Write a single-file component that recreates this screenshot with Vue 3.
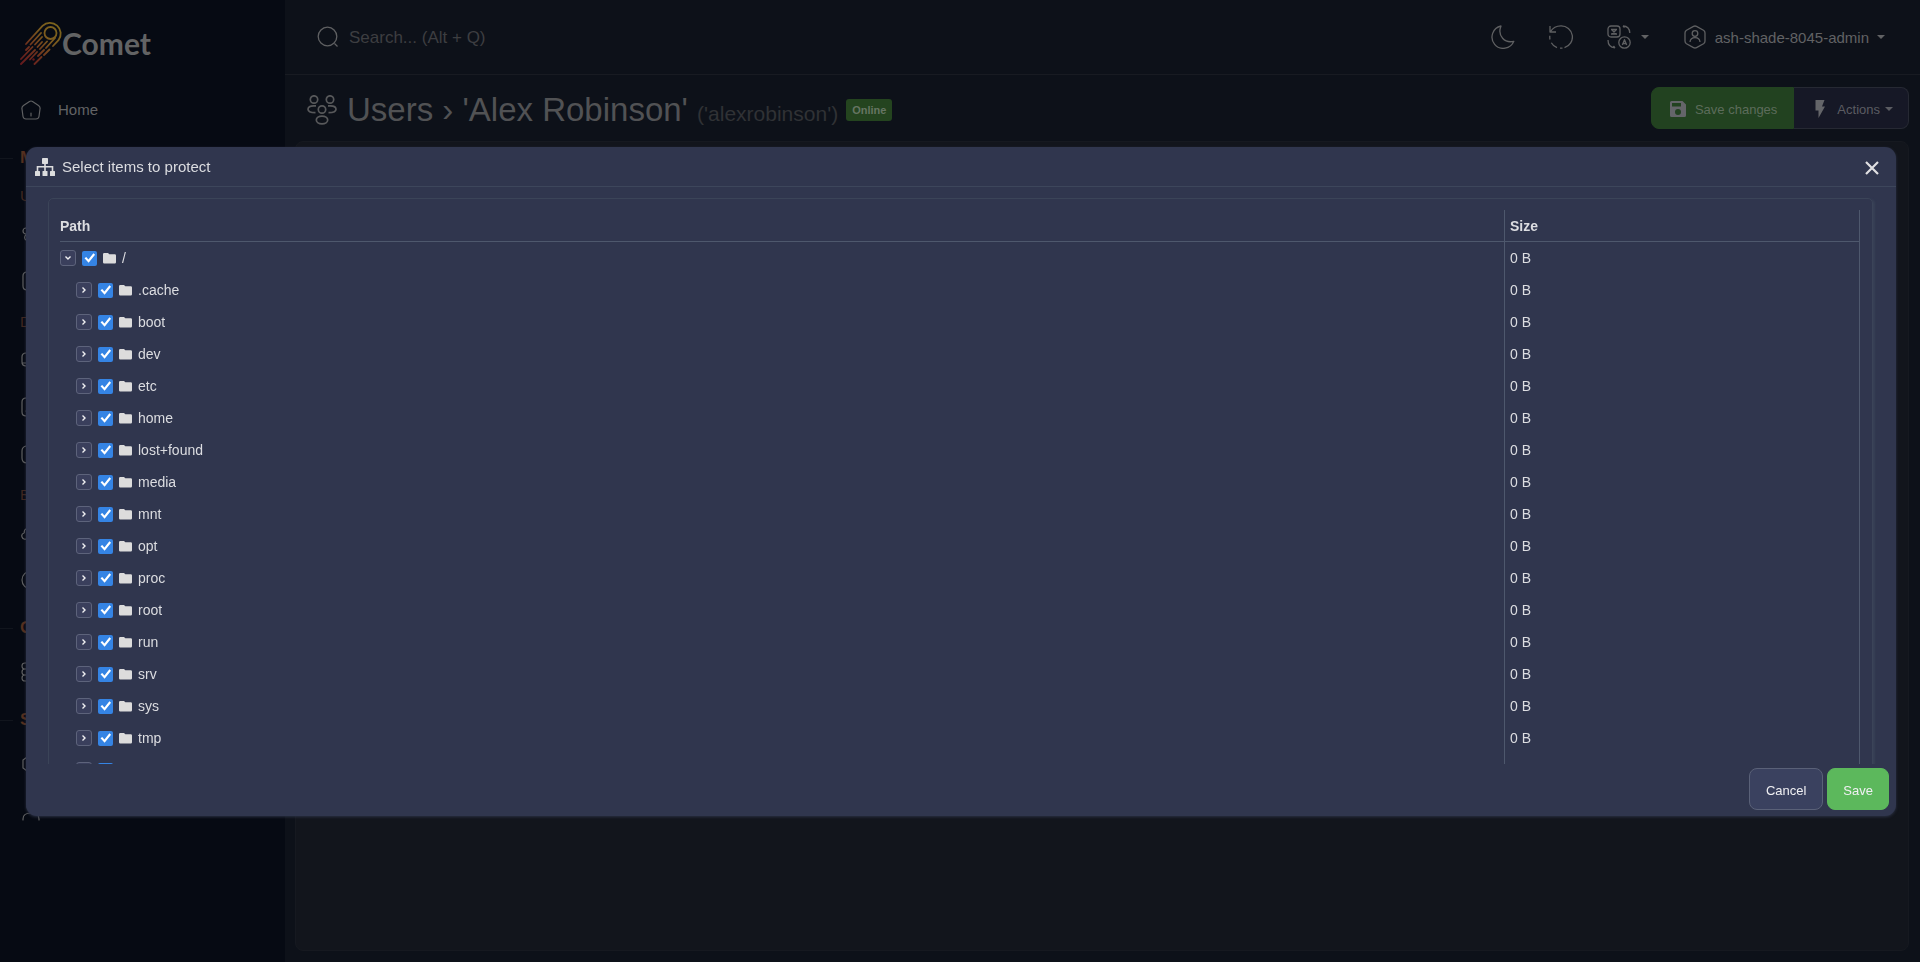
<template>
  <div class="layout">
    <aside class="sidebar">
      <a href="#" class="logo">
        <svg class="logo__mark" viewBox="0 0 42 44" fill="none">
          <defs>
            <linearGradient id="comet" x1="40" y1="3" x2="2" y2="43" gradientUnits="userSpaceOnUse">
              <stop offset="0" stop-color="#7b661c" />
              <stop offset="0.35" stop-color="#7b591e" />
              <stop offset="0.7" stop-color="#6e2f1d" />
              <stop offset="1" stop-color="#651a1d" />
            </linearGradient>
          </defs>
          <g stroke="url(#comet)" stroke-width="1.8" stroke-linecap="round">
            <circle cx="30.5" cy="12" r="6" />
            <path d="M6 23L22.500 4.800A10.800 10.800 0 0 1 38.500 19.200L33 25" />
            <path d="M10.500 23.500L21 12M9 26L6 29M22 16L15 23.500M12.500 26L1 38" />
            <path d="M22 21L17.500 26M15 29L1 43M27 20.500L20 28M17 31L10 38.500" />
            <path d="M35 17L26 27M24 29L18 35M29.500 28.500L24 34M21.500 36L14.500 43" />
          </g>
          <circle cx="13.5" cy="38.5" r="1.2" fill="#651a1d" />
        </svg>
        <span class="logo__text">Comet</span>
      </a>

      <nav class="menu">
        <template v-for="entry in menu" :key="entry.label">
          <h3 v-if="entry.type === 'section'" class="menu__section">{{ entry.label }}</h3>
          <h4 v-else-if="entry.type === 'group'" class="menu__group">{{ entry.label }}</h4>
          <a v-else href="#" class="menu__item">
            <svg class="menu__icon" viewBox="0 0 20 20">
              <path :d="entry.icon" />
            </svg>
            <span>{{ entry.label }}</span>
          </a>
        </template>
      </nav>
    </aside>

    <div class="main">
      <header class="topbar">
        <label class="search">
          <svg class="search__icon" viewBox="0 0 22 22">
            <circle cx="10.5" cy="10.5" r="9.3" />
            <path d="M17.500 17.500L20.500 20.500" />
          </svg>
          <input type="text" placeholder="Search... (Alt + Q)" aria-label="Search" />
        </label>

        <div class="topbar__tools">
          <button type="button" class="tool" aria-label="Toggle theme">
            <svg viewBox="0 0 24 24">
              <path d="M10 1A11.300 11.300 0 1 0 22.800 16.300C14 18.500 6 11 10 1Z" />
            </svg>
          </button>
          <button type="button" class="tool" aria-label="Refresh">
            <svg viewBox="0 0 24 24">
              <path d="M1 1V7H7M1.500 6.500C4 2.500 8 .800 12 .800A11.200 11.200 0 0 1 15.500 22.700" />
              <path d="M11 23.200H13.500M8 22.600C5.500 21.700 3.500 20 2.300 17.800M1 14.500C.700 13 .700 12 .800 10.700" />
            </svg>
          </button>
          <button type="button" class="tool tool--lang" aria-label="Language">
            <svg viewBox="0 0 24 24">
              <rect x="1" y="1" width="12" height="11" rx="3" />
              <path d="M4 4.500H10M5 5L9 9M9 5L5 9M4 9H10" />
              <circle cx="17.5" cy="17.5" r="5.7" />
              <path d="M15.300 20L17.500 14.700L19.700 20M16 18.500H19" />
              <path d="M16 1C20 1 22.500 3.500 22.800 8M16 1L17.500 2.500M1 15C1 19 3 22.500 8 22.800M8 22.800L6.500 21" />
            </svg>
            <span class="caret"></span>
          </button>
          <button type="button" class="tool tool--user">
            <svg viewBox="0 0 24 24">
              <path d="M10.500 1.400Q12 .600 13.500 1.400L20.500 5.300Q22 6.200 22 8V16Q22 17.800 20.500 18.700L13.500 22.600Q12 23.400 10.500 22.600L3.500 18.700Q2 17.800 2 16V8Q2 6.200 3.500 5.300Z" />
              <circle cx="12" cy="8.5" r="2.8" />
              <path d="M7 17C7.300 14 9.300 12.700 12 12.700S16.700 14 17 17" />
            </svg>
            <span>ash-shade-8045-admin</span>
            <span class="caret"></span>
          </button>
        </div>
      </header>

      <div class="heading">
        <div class="heading__text">
          <svg class="heading__icon" viewBox="0 0 30 30">
            <circle cx="7" cy="4.5" r="3.7" />
            <circle cx="23" cy="4.5" r="3.7" />
            <circle cx="15" cy="14.5" r="3.7" />
            <ellipse cx="15" cy="25" rx="5.7" ry="3.8" />
            <path d="M9 10.800H6.500C3 10.800 1 12.300 1 14.300S3 17.700 8.500 17.700" />
            <path d="M21 10.800H23.500C27 10.800 29 12.300 29 14.300S27 17.700 21.500 17.700" />
          </svg>
          <h1 class="heading__title">Users › 'Alex Robinson' <small>('alexrobinson')</small></h1>
          <span class="badge">Online</span>
        </div>
        <div class="heading__actions">
          <button type="button" class="page-btn page-btn--save">
            <svg viewBox="0 0 18 18">
              <path fill-rule="evenodd" d="M2.500 1H13.500L17 4.500V15.500Q17 17 15.500 17H2.500Q1 17 1 15.500V2.500Q1 1 2.500 1ZM3 3V6.500H12V3ZM9 9A3 3 0 1 0 9 15A3 3 0 1 0 9 9Z" />
            </svg>
            Save changes
          </button>
          <button type="button" class="page-btn page-btn--actions">
            <svg viewBox="0 0 18 18">
              <path d="M4.500 0H13.500L11 6.500H14L7.500 18V10.500H4.500Z" />
            </svg>
            Actions
            <span class="caret"></span>
          </button>
        </div>
      </div>

      <section class="card"></section>
    </div>

    <div v-if="open" class="overlay">
      <div class="modal" role="dialog" aria-labelledby="modal-title">
        <div class="modal__header">
          <svg class="modal__icon" viewBox="0 0 20 18">
            <rect x="7" y="0" width="6" height="6" rx="0.7" />
            <rect x="0" y="13" width="5" height="5" rx="0.5" />
            <rect x="7.5" y="13" width="5" height="5" rx="0.5" />
            <rect x="15" y="13" width="5" height="5" rx="0.5" />
            <path d="M9.200 5H10.800V8H18.300V13H16.700V9.600H10.800V13H9.200V9.600H3.300V13H1.700V8H9.200Z" />
          </svg>
          <h2 id="modal-title" class="modal__title">Select items to protect</h2>
          <button type="button" class="modal__close" aria-label="Close" @click="open = false">
            <svg viewBox="0 0 14 14">
              <path d="M1 1L13 13M13 1L1 13" />
            </svg>
          </button>
        </div>

        <div class="modal__body">
          <div class="panel">
            <table class="tree">
              <colgroup>
                <col />
                <col class="tree__size" />
              </colgroup>
              <thead>
                <tr>
                  <th>Path</th>
                  <th>Size</th>
                </tr>
              </thead>
              <tbody>
                <tr v-for="row in visibleRows" :key="row.name">
                  <td>
                    <div class="node" :class="{ 'node--child': row.depth > 0 }">
                      <button
                        type="button"
                        class="node__toggle"
                        :class="{ 'is-open': row.depth === 0 && expanded }"
                        :aria-label="'Expand ' + row.name"
                        @click="toggle(row)"
                      >
                        <svg viewBox="0 0 8 8"><path d="M2.500 1.500L5 4L2.500 6.500" /></svg>
                      </button>
                      <input :id="'node-' + row.name" v-model="row.checked" type="checkbox" />
                      <label :for="'node-' + row.name">
                        <svg viewBox="0 0 13 11">
                          <path d="M1.200 0H5L6.300 1.300H11.800Q13 1.300 13 2.500V9.300Q13 10.500 11.800 10.500H1.200Q0 10.500 0 9.300V1.200Q0 0 1.200 0Z" />
                        </svg>
                        {{ row.name }}
                      </label>
                    </div>
                  </td>
                  <td>0 B</td>
                </tr>
              </tbody>
            </table>
          </div>
        </div>

        <div class="modal__footer">
          <button type="button" class="btn" @click="open = false">Cancel</button>
          <button type="button" class="btn btn--primary" @click="open = false">Save</button>
        </div>
      </div>
    </div>
  </div>
</template>

<script setup>
import { computed, reactive, ref } from "vue";

const open = ref(true);
const expanded = ref(true);

const person =
  "M10 1A4 4 0 1 1 10 9A4 4 0 1 1 10 1ZM2 19V18C2 14 5 12 10 12S18 14 18 18V19";
const box =
  "M5 1H15Q19 1 19 5V15Q19 19 15 19H5Q1 19 1 15V5Q1 1 5 1ZM5 14H15";
const cloud =
  "M5 16H15A4 4 0 0 0 16 8A6 6 0 0 0 5 6C2 7 4 10 3 10A3 3 0 0 0 5 16Z";

const menu = [
  {
    label: "Home",
    icon: "M8.500 1.500Q10 .500 11.500 1.500L17.500 5.500Q19.500 7 19 9L18 16.500Q17.500 19 15 19H5Q2.500 19 2 16.500L1 9Q.500 7 2.500 5.500ZM10 13V16",
  },
  { type: "section", label: "Manage" },
  { type: "group", label: "Users" },
  {
    label: "Accounts",
    icon: "M5 4A3 3 0 1 1 5 10A3 3 0 1 1 5 4ZM14 4A3 3 0 1 1 14 10A3 3 0 1 1 14 4ZM5 11A3 3 0 0 0 5 16H14",
  },
  { label: "Groups", icon: "M6 1H15Q19 1 19 5V15Q19 19 15 19H6Q2 19 2 15V5Q2 1 6 1Z" },
  { type: "group", label: "Devices" },
  {
    label: "Computers",
    icon: "M5 3H15Q19 3 19 7V16H5Q1 16 1 12V7Q1 3 5 3ZM1 13H19",
  },
  { label: "Policies", icon: box },
  {
    label: "Software",
    icon: "M7 2H14Q19 2 19 7V14Q19 19 14 19H6Q1 19 1 14V7Q1 3 5 2M9 7A3 3 0 1 0 9 13",
  },
  { type: "group", label: "Backup" },
  { label: "Storage", icon: cloud },
  { label: "Jobs", icon: "M10 1A9 9 0 1 1 10 19A9 9 0 1 1 10 1ZM10 5V10L13 12" },
  { type: "section", label: "Overview" },
  {
    label: "Server",
    icon: "M4 1H16Q19 1 19 4T16 7H4Q1 7 1 4T4 1ZM4 7H16Q19 7 19 10T16 13H4Q1 13 1 10T4 7ZM4 13H16Q19 13 19 16T16 19H4Q1 19 1 16T4 13Z",
  },
  { type: "section", label: "Support" },
  { label: "Help", icon: "M6 3H14L19 7V13L14 17H6L2 14V6Z" },
  { label: "Comet Account Portal", icon: person },
];

const rows = reactive(
  [
    "/",
    ".cache",
    "boot",
    "dev",
    "etc",
    "home",
    "lost+found",
    "media",
    "mnt",
    "opt",
    "proc",
    "root",
    "run",
    "srv",
    "sys",
    "tmp",
    "usr",
    "var",
  ].map((name, i) => ({ name, depth: i === 0 ? 0 : 1, checked: true })),
);

const visibleRows = computed(() =>
  expanded.value ? rows : rows.filter((r) => r.depth === 0),
);

function toggle(row) {
  if (row.depth === 0) expanded.value = !expanded.value;
}
</script>

<style>
body {
  margin: 0;
  background: #0d1119;
}
</style>

<style scoped>
.layout {
  display: flex;
  height: 100vh;
  overflow: hidden;
  background: #0d1119;
  color: #616264;
  font-family: "Liberation Sans", Arial, sans-serif;
  font-size: 15px;
}

.layout *,
.layout *::before {
  box-sizing: border-box;
}

button {
  font-family: inherit;
  cursor: pointer;
}

svg {
  flex-shrink: 0;
}

.sidebar {
  width: 285px;
  flex-shrink: 0;
  background: #060a13;
}

.logo {
  display: flex;
  align-items: center;
  height: 86px;
  padding-left: 20px;
  text-decoration: none;
  color: #626364;
}

.logo__mark {
  width: 42px;
  height: 44px;
}

.logo__text {
  font-family: Lato, sans-serif;
  font-weight: 700;
  font-size: 30px;
}

.menu__item {
  display: flex;
  align-items: center;
  gap: 17px;
  height: 47px;
  padding-left: 21px;
  color: #626365;
  text-decoration: none;
}

.menu__icon {
  width: 20px;
  height: 20px;
  fill: none;
  stroke: #5f6062;
  stroke-width: 1.2;
  stroke-linecap: round;
}

.menu__section,
.menu__group {
  display: flex;
  align-items: center;
  margin: 0;
  color: #54301f;
}

.menu__section {
  height: 45px;
  padding-top: 5px;
  gap: 7px;
  font-size: 17px;
}

.menu__section::before {
  content: "";
  width: 13px;
  height: 1px;
  background: #11151d;
}

.menu__group {
  height: 32px;
  padding: 2px 0 0 20px;
  font-size: 15px;
  font-weight: 400;
  color: #402821;
}

.main {
  flex: 1;
  min-width: 0;
  display: flex;
  flex-direction: column;
}

.topbar {
  display: flex;
  align-items: center;
  justify-content: space-between;
  height: 75px;
  padding: 0 32px;
  border-bottom: 1px solid #181b22;
}

.search {
  display: flex;
  align-items: center;
  gap: 10px;
}

.search__icon {
  width: 22px;
  height: 22px;
  fill: none;
  stroke: #5f6062;
  stroke-width: 1.3;
}

.search input {
  width: 300px;
  padding: 2px 0 0;
  border: none;
  outline: none;
  background: transparent;
  font-family: inherit;
  font-size: 17px;
}

.search input::placeholder {
  color: #3d3e41;
}

.topbar__tools {
  display: flex;
  align-items: center;
  gap: 34px;
}

.tool {
  display: flex;
  align-items: center;
  gap: 10px;
  padding: 0;
  border: none;
  background: transparent;
  color: #616264;
  font-size: 15px;
}

.tool svg {
  width: 24px;
  height: 24px;
  fill: none;
  stroke: #5f6062;
  stroke-width: 1.3;
  stroke-linejoin: round;
}

.tool--user {
  padding-right: 3px;
  gap: 8px;
}

.caret {
  border: 4px solid transparent;
  border-top-color: currentColor;
  border-bottom: none;
}

.heading {
  display: flex;
  align-items: center;
  justify-content: space-between;
  height: 66px;
  padding: 0 11px 0 22px;
}

.heading__text {
  display: flex;
  align-items: center;
  padding-top: 4px;
}

.heading__icon {
  width: 30px;
  height: 30px;
  fill: none;
  stroke: #58595b;
  stroke-width: 1.7;
}

.heading__title {
  margin: 0 0 0 10px;
  padding-top: 3px;
  font-size: 33px;
  line-height: 40px;
  font-weight: 400;
  color: #515254;
}

.heading__title small {
  font-size: 21px;
  color: #303235;
}

.badge {
  margin-left: 8px;
  padding: 0 6px;
  border-radius: 3px;
  background: #24441f;
  color: #667563;
  font-size: 11px;
  line-height: 22px;
  font-weight: 700;
}

.heading__actions {
  display: flex;
}

.page-btn {
  display: flex;
  align-items: center;
  gap: 8px;
  height: 42px;
  border: 1px solid #262933;
  background: #161826;
  color: #5b5c62;
  font-size: 13px;
}

.page-btn svg {
  width: 18px;
  height: 18px;
  fill: #646569;
}

.page-btn--save {
  padding: 2px 16px 0 17px;
  border-color: #224220;
  border-radius: 8px 0 0 8px;
  background: #224220;
  color: #5d6c5b;
}

.page-btn--actions {
  padding: 2px 15px 0 17px;
  border-left: none;
  border-radius: 0 8px 8px 0;
}

.page-btn .caret {
  margin-left: -3px;
}

.card {
  flex: 1;
  margin: 0 11px 11px 10px;
  border: 1px solid #161920;
  border-radius: 8px;
  background: #12151c;
}

.overlay {
  position: fixed;
  inset: 0;
  display: flex;
  padding: 147px 24px 146px 26px;
}

.modal {
  flex: 1;
  min-width: 0;
  display: flex;
  flex-direction: column;
  border-radius: 11px;
  background: #30364e;
  color: #dcdde1;
  box-shadow: 0 1px 3px #2b3144;
}

.modal__header {
  display: flex;
  align-items: center;
  height: 40px;
  padding: 0 17px 0 9px;
  border-bottom: 1px solid #3d465b;
}

.modal__icon {
  width: 20px;
  height: 18px;
  fill: #dcddde;
}

.modal__title {
  margin: 0 0 0 7px;
  font-size: 15px;
  font-weight: 400;
}

.modal__close {
  display: flex;
  margin-left: auto;
  padding: 2px 0 0;
  border: none;
  background: transparent;
}

.modal__close svg {
  width: 14px;
  height: 14px;
  stroke: #e0e0e2;
  stroke-width: 2.2;
}

.modal__body {
  flex: 1;
  min-height: 0;
  padding: 11px 23px 0 22px;
  overflow-y: auto;
  scrollbar-width: none;
}

.panel {
  padding: 11px 12px 11px 11px;
  border: 1px solid #3b4458;
  border-radius: 5px;
  box-shadow: 2px 1px 2px #384156;
}

.tree {
  width: 100%;
  table-layout: fixed;
  border-spacing: 0;
  font-size: 14px;
  line-height: 16px;
}

.tree__size {
  width: 356px;
}

.tree th {
  height: 32px;
  padding: 0;
  border-bottom: 1px solid #4e586d;
  text-align: left;
}

.tree td {
  height: 32px;
  padding: 0;
}

.tree th:last-child,
.tree td:last-child {
  padding-left: 5px;
  border-left: 1px solid #4e586d;
  border-right: 1px solid #4e586d;
}

.node {
  display: flex;
  align-items: center;
  gap: 6px;
}

.node--child {
  padding-left: 16px;
}

.node__toggle {
  display: flex;
  align-items: center;
  justify-content: center;
  width: 16px;
  height: 16px;
  padding: 0;
  border: 1px solid #5d637b;
  border-radius: 3px;
  background: #3a3f5c;
}

.node__toggle svg {
  width: 8px;
  height: 8px;
  fill: none;
  stroke: #f0f0f2;
  stroke-width: 1.4;
}

.node__toggle.is-open svg {
  transform: rotate(90deg);
}

.node input {
  appearance: none;
  width: 15px;
  height: 15px;
  margin: 0;
  border: 1px solid #8a90a3;
  border-radius: 2px;
}

.node input:checked {
  border: none;
  background: #3584e4;
}

.node input:checked::before {
  content: "";
  display: block;
  width: 15px;
  height: 15px;
  background: #fff;
  clip-path: polygon(17% 52%, 28% 43%, 43% 60%, 76% 19%, 87% 29%, 44% 82%);
}

.node label {
  display: flex;
  align-items: center;
  gap: 6px;
}

.node label svg {
  width: 13px;
  height: 11px;
  fill: #dcdcdc;
}

.modal__footer {
  display: flex;
  justify-content: flex-end;
  gap: 4px;
  padding: 4px 7px 6px;
}

.btn {
  height: 42px;
  padding: 2px 16px 0;
  border: 1px solid #5a6178;
  border-radius: 8px;
  background: #3a415f;
  color: #f0f0f3;
  font-size: 13px;
}

.btn--primary {
  padding: 2px 15px 0;
  border-color: #5cb85c;
  background: #5cb85c;
}
</style>
